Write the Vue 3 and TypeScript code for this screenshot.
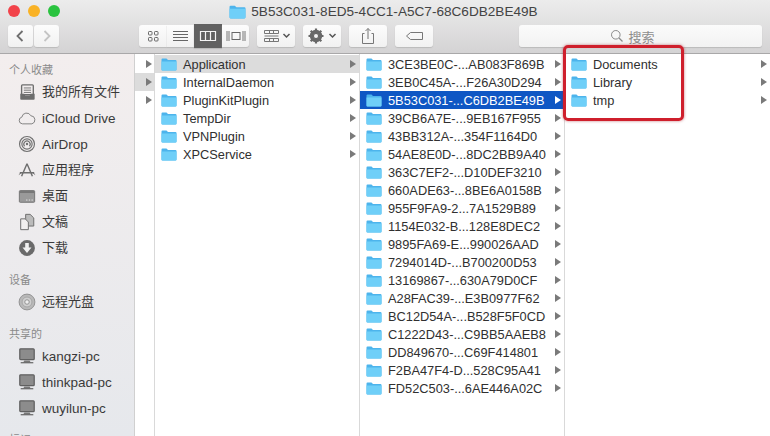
<script setup lang="ts">
type Side = { kind: 'head' | 'item'; label: string; icon?: string }
const side: Side[] = [
  { kind: 'head', label: '个人收藏' },
  { kind: 'item', label: '我的所有文件', icon: 'all' },
  { kind: 'item', label: 'iCloud Drive', icon: 'cloud' },
  { kind: 'item', label: 'AirDrop', icon: 'air' },
  { kind: 'item', label: '应用程序', icon: 'app' },
  { kind: 'item', label: '桌面', icon: 'desk' },
  { kind: 'item', label: '文稿', icon: 'doc' },
  { kind: 'item', label: '下载', icon: 'down' },
  { kind: 'head', label: '设备' },
  { kind: 'item', label: '远程光盘', icon: 'disc' },
  { kind: 'head', label: '共享的' },
  { kind: 'item', label: 'kangzi-pc', icon: 'pc' },
  { kind: 'item', label: 'thinkpad-pc', icon: 'pc' },
  { kind: 'item', label: 'wuyilun-pc', icon: 'pc' },
]
const isLatin = (s: string): boolean => /^[\x00-\x7f]+$/.test(s)
const col2 = ['Application', 'InternalDaemon', 'PluginKitPlugin', 'TempDir', 'VPNPlugin', 'XPCService']
const col3 = [
  '3CE3BE0C-...AB083F869B', '3EB0C45A-...F26A30D294', '5B53C031-...C6DB2BE49B', '39CB6A7E-...9EB167F955',
  '43BB312A-...354F1164D0', '54AE8E0D-...8DC2BB9A40', '363C7EF2-...D10DEF3210', '660ADE63-...8BE6A0158B',
  '955F9FA9-2...7A1529B89', '1154E032-B...128E8DEC2', '9895FA69-E...990026AAD', '7294014D-...B700200D53',
  '13169867-...630A79D0CF', 'A28FAC39-...E3B0977F62', 'BC12D54A-...B528F5F0CD', 'C1222D43-...C9BB5AAEB8',
  'DD849670-...C69F414801', 'F2BA47F4-D...528C95A41', 'FD52C503-...6AE446A02C',
]
const col4 = ['Documents', 'Library', 'tmp']
</script>

<template>
  <div class="win">
    <header class="chrome">
      <div class="titlebar">
        <div class="lights">
          <i class="light red"></i><i class="light yellow"></i><i class="light green"></i>
        </div>
        <div class="title">
          <svg class="folder big" viewBox="0 0 16 14"><use href="#fld" /></svg>
          <span>5B53C031-8ED5-4CC1-A5C7-68C6DB2BE49B</span>
        </div>
      </div>
      <div class="toolbar">
        <div class="group nav">
          <button class="btn w25"><svg viewBox="0 0 25 22" class="ic25"><path d="M14.500 6 9.500 11l5 5" fill="none" stroke="#6f6f6f" stroke-width="1.800"/></svg></button>
          <button class="btn w25"><svg viewBox="0 0 25 22" class="ic25"><path d="M10.500 6l5 5-5 5" fill="none" stroke="#c4c4c4" stroke-width="1.800"/></svg></button>
        </div>
        <div class="group views">
          <button class="seg"><svg viewBox="0 0 28 24" class="ic28"><g fill="none" stroke="#666" stroke-width="1"><rect x="9.500" y="7.500" width="3.500" height="3.500" rx=".8"/><rect x="15.500" y="7.500" width="3.500" height="3.500" rx=".8"/><rect x="9.500" y="13.500" width="3.500" height="3.500" rx=".8"/><rect x="15.500" y="13.500" width="3.500" height="3.500" rx=".8"/></g></svg></button>
          <button class="seg"><svg viewBox="0 0 28 24" class="ic28"><path d="M6 7.500h15M6 10.500h15M6 13.500h15M6 16.500h15" stroke="#666" stroke-width="1"/></svg></button>
          <button class="seg on"><svg viewBox="0 0 28 24" class="ic28"><path d="M6.500 7.500h15v9h-15zM11.500 7.500v9M16.500 7.500v9" fill="none" stroke="#f4f4f4" stroke-width="1.200"/></svg></button>
          <button class="seg"><svg viewBox="0 0 28 24" class="ic28"><path d="M5 7v10M7 7v10M21 7v10M23 7v10" stroke="#777" stroke-width="1"/><rect x="10" y="8.500" width="8" height="7" fill="none" stroke="#666" stroke-width="1"/></svg></button>
        </div>
        <button class="btn arrange"><svg viewBox="0 0 38 22" class="ic38"><g fill="none" stroke="#777" stroke-width="1"><path d="M7.500 5.500h14v3h-14zM7.500 13.500h14v3h-14zM12.500 5.500v3M16.500 5.500v3M12.500 13.500v3M16.500 13.500v3M7.500 11h14"/><path d="M26.500 9l3 3 3-3" stroke="#555" stroke-width="1.500"/></g></svg></button>
        <button class="btn gear"><svg viewBox="0 0 38 22" class="ic38"><circle cx="13" cy="11" r="4.600" fill="none" stroke="#686868" stroke-width="3.200"/><path d="M13 3.500v15M5.500 11h15M7.700 5.700l10.600 10.600M18.300 5.700 7.700 16.300" stroke="#686868" stroke-width="2.200"/><circle cx="13" cy="11" r="2" fill="#f3f2f3"/><path d="M26.500 9l3 3 3-3" fill="none" stroke="#555" stroke-width="1.500"/></svg></button>
        <button class="btn share"><svg viewBox="0 0 38 22" class="ic38"><path d="M15.500 8.500h-2v10h11v-10h-2M19 14V3.500M16.500 6 19 3.500 21.500 6" fill="none" stroke="#777" stroke-width="1"/></svg></button>
        <button class="btn tag"><svg viewBox="0 0 38 22" class="ic38"><path d="M11.500 11l4-3.500h12v7h-12z" fill="none" stroke="#777" stroke-width="1"/></svg></button>
        <div class="search">
          <svg viewBox="0 0 14 14" class="lens"><circle cx="5.800" cy="5.800" r="4.300" fill="none" stroke="#8a8a8a" stroke-width="1"/><path d="M9 9l3.500 3.500" stroke="#8a8a8a" stroke-width="1.200"/></svg>
          <span>搜索</span>
        </div>
      </div>
    </header>

    <div class="body">
      <aside class="sidebar">
        <template v-for="s in side" :key="s.label">
          <div v-if="s.kind === 'head'" class="head">{{ s.label }}</div>
          <div v-else class="item" :class="{ latin: isLatin(s.label) }">
            <svg class="sicon" viewBox="0 0 20 20">
              <g v-if="s.icon === 'all'">
                <rect x="4" y="2" width="13" height="11" rx="1" fill="none" stroke="#6d6d6d" stroke-width="1.500"/>
                <path d="M6.500 5.500h8M6.500 8h8M6.500 10.500h8" stroke="#6d6d6d" stroke-width="1"/>
                <path d="M2.500 12h4.500l1 2h5l1-2h4.500v5.500a1 1 0 0 1-1 1h-14a1 1 0 0 1-1-1z" fill="#6d6d6d"/>
              </g>
              <path v-else-if="s.icon === 'cloud'" d="M5 16.500a3.800 3.800 0 0 1-.7-7.500 5.300 5.300 0 0 1 10-1.500 4.600 4.600 0 0 1 1.200 9z" fill="none" stroke="#777" stroke-width="1"/>
              <g v-else-if="s.icon === 'air'" fill="none" stroke="#717171">
                <circle cx="10" cy="10" r="8.300" stroke-width="1.300"/>
                <circle cx="10" cy="10" r="5.700" stroke-width="1.300"/>
                <path d="M7.300 12.500a3.500 3.500 0 1 1 5.400 0" stroke-width="1.300"/>
                <circle cx="10" cy="10" r="1.300" fill="#717171" stroke="none"/>
              </g>
              <g v-else-if="s.icon === 'app'" fill="none" stroke="#6f6f6f" stroke-width="1.600">
                <path d="M10 3 4 17M10 3l6 14M2 13h16"/>
                <path d="M1 15l3-2M19 15l-3-2" stroke-width="1"/>
              </g>
              <g v-else-if="s.icon === 'desk'">
                <rect x="1.500" y="4" width="17" height="13" rx="1" fill="#9a9a9a" stroke="#6f6f6f"/>
                <rect x="2" y="4.500" width="16" height="2.200" fill="#777"/>
                <path d="M9 14.500h1.500M12 14.500h1.500M15 14.500h1.500" stroke="#eee" stroke-width="1"/>
              </g>
              <g v-else-if="s.icon === 'doc'" stroke="#6f6f6f" stroke-width="1.100">
                <path d="M8.500 1.500h5l4 4v9h-9z" fill="#bbb"/>
                <path d="M3 6.500h5l3.500 3.500v8.500H3z" fill="#f1efef"/>
              </g>
              <g v-else-if="s.icon === 'down'">
                <circle cx="10" cy="10" r="8.800" fill="#6a6a6a"/>
                <path d="M8 4.500h4v5h3l-5 6-5-6h3z" fill="#f1f1f1"/>
              </g>
              <g v-else-if="s.icon === 'disc'">
                <circle cx="10" cy="10" r="8.800" fill="#b9b9b9" stroke="#8c8c8c"/>
                <circle cx="10" cy="10" r="5.500" fill="#cfcfcf" stroke="#a3a3a3"/>
                <circle cx="10" cy="10" r="2.500" fill="#eee" stroke="#8c8c8c"/>
              </g>
              <g v-else>
                <rect x="2" y="2" width="16" height="12" rx="1" fill="#8c8c8c" stroke="#606060" stroke-width="1.400"/>
                <path d="M7 15h6l1 2H6z" fill="#777"/>
                <path d="M3 17.500h14" stroke="#555" stroke-width="1.200"/>
              </g>
            </svg>
            <span>{{ s.label }}</span>
          </div>
        </template>
        <div class="head last"><i class="mini"></i>标记</div>
      </aside>

      <div class="col col1">
        <div class="row strip" v-for="n in 3" :key="n" :class="{ picked: n === 2 }"><i class="tri"></i></div>
      </div>

      <div class="col col2">
        <div v-for="(c, i) in col2" :key="c" class="row" :class="{ dim: i === 0 }">
          <svg class="folder" viewBox="0 0 16 14"><use href="#fld" /></svg>
          <span class="name">{{ c }}</span><i class="tri"></i>
        </div>
      </div>

      <div class="col col3">
        <div v-for="(c, i) in col3" :key="c" class="row" :class="{ sel: i === 2 }">
          <svg class="folder" viewBox="0 0 16 14"><use href="#fld" /></svg>
          <span class="name">{{ c }}</span><i class="tri"></i>
        </div>
      </div>

      <div class="col col4">
        <div v-for="c in col4" :key="c" class="row">
          <svg class="folder" viewBox="0 0 16 14"><use href="#fld" /></svg>
          <span class="name">{{ c }}</span><i class="tri"></i>
        </div>
      </div>
    </div>

    <div class="mark"></div>

    <svg class="defs" width="0" height="0">
      <defs>
        <g id="fld">
          <path d="M.5 2.500a1 1 0 0 1 1-1h4l1.500 1.500h7.500a1 1 0 0 1 1 1v8.500a1 1 0 0 1-1 1h-13a1 1 0 0 1-1-1z" fill="#4db4ec"/>
          <path d="M.5 4.500h15v8a1 1 0 0 1-1 1h-13a1 1 0 0 1-1-1z" fill="#6fcff8"/>
        </g>
      </defs>
    </svg>
  </div>
</template>

<style scoped>
.win {
  position: relative;
  width: 770px;
  height: 436px;
  overflow: hidden;
  background: #fff;
  font-family: "Liberation Sans", "Noto Sans CJK SC", sans-serif;
  color: #2e2e2e;
}
.chrome {
  height: 54px;
  box-sizing: border-box;
  background: linear-gradient(#ececec, #d4d3d4);
  border-bottom: 1px solid #a9a8a9;
}
.titlebar {
  position: relative;
  height: 22px;
  display: flex;
  justify-content: center;
  align-items: center;
}
.lights {
  position: absolute;
  left: 8px;
  top: 5px;
  display: flex;
  gap: 8px;
}
.light { width: 12px; height: 12px; border-radius: 50%; }
.red { background: #f2434a; }
.yellow { background: #f9b225; }
.green { background: #2ac33f; }
.title {
  display: flex;
  align-items: center;
  gap: 5px;
  padding-top: 1px;
  margin-right: 3px;
  font-size: 13.600px;
  color: #444;
}
.toolbar {
  height: 31px;
  display: flex;
  align-items: flex-start;
  padding: 3px 0 0 8px;
}
.group { display: flex; }
.btn, .seg {
  padding: 0;
  border: 0;
  display: block;
  background: linear-gradient(#fcfcfc, #f1f1f1);
  box-shadow: 0 1px 1px #bbb;
}
.btn { height: 22px; border-radius: 3px; }
.btn svg, .seg svg { display: block; }
.w25 { width: 25px; }
.nav { gap: 1px; }
.ic25 { width: 25px; height: 22px; }
.views { margin-left: 80px; border-radius: 3px; height: 22px; }
.seg { width: 27px; height: 22px; overflow: hidden; }
.seg svg { margin-top: -1px; }
.seg:first-child { width: 28px; border-radius: 3px 0 0 3px; }
.seg:last-child { border-radius: 0 3px 3px 0; }
.seg.on { width: 28px; height: 24px; margin-top: -1px; background: #616161; }
.seg.on svg { margin-top: 0; }
.ic28 { width: 28px; height: 24px; }
.arrange, .gear, .share, .tag { width: 38px; margin-left: 8px; }
.ic38 { width: 38px; height: 22px; }
.search {
  width: 243px;
  height: 22px;
  margin-left: 86px;
  border-radius: 3px;
  background: linear-gradient(#fbfbfb, #f2f2f2);
  box-shadow: 0 1px 1px #bbb;
  display: flex;
  align-items: center;
  justify-content: center;
  gap: 4px;
  padding-right: 16px;
  box-sizing: border-box;
  font-size: 13px;
  color: #8e8e8e;
}
.lens { width: 14px; height: 14px; }

.body {
  display: flex;
  height: 382px;
}
.sidebar {
  width: 135px;
  height: 382px;
  flex: none;
  box-sizing: border-box;
  border-right: 1px solid #d0d0d0;
  background: linear-gradient(#f3eeee, #e6e8ec);
  overflow: hidden;
}
.head {
  height: 28px;
  box-sizing: border-box;
  padding: 0 0 2px 9px;
  display: flex;
  align-items: flex-end;
  font-size: 11px;
  line-height: 13px;
  color: #8a8a8a;
}
.head:first-child { height: 25px; }
.head.last { position: relative; }
.mini {
  position: absolute;
  left: 0;
  bottom: 5px;
  border-left: 4px solid #8a8a8a;
  border-top: 3px solid transparent;
  border-bottom: 3px solid transparent;
}
.item {
  height: 26px;
  display: flex;
  align-items: center;
  padding-left: 18px;
  gap: 6px;
  font-size: 13px;
  color: #3a3a3a;
}
.item span { margin-bottom: 3px; }
.item.latin { font-size: 13.500px; }
.item.latin span { margin-bottom: 0; }
.sicon { width: 18px; height: 18px; flex: none; }

.col { box-sizing: border-box; padding-top: 1px; }
.col1 { width: 20px; flex: none; border-right: 1px solid #d9d9d9; }
.col2 { width: 205px; flex: none; border-right: 1px solid #d9d9d9; }
.col3 { width: 205px; flex: none; border-right: 1px solid #d9d9d9; }
.col4 { flex: 1; }
.row {
  height: 18px;
  display: flex;
  align-items: center;
  padding: 0 3px 0 6px;
  font-size: 12.800px;
  color: #303030;
}
.strip { padding: 0; justify-content: center; }
.picked { background: #dcdcdc; }
.dim { background: #dcdcdc; }
.sel { background: #0f57c4; color: #fff; }
.folder { width: 16px; height: 14px; flex: none; }
.big { width: 17px; height: 15px; }
.name { margin-left: 6px; flex: 1; white-space: nowrap; }
.tri {
  width: 0;
  height: 0;
  flex: none;
  border-left: 6px solid #7a7a7a;
  border-top: 4px solid transparent;
  border-bottom: 4px solid transparent;
}
.strip .tri { margin-left: 8px; }
.sel .tri { border-left-color: #fff; }
.mark {
  position: absolute;
  left: 563px;
  top: 45px;
  width: 121px;
  height: 76px;
  box-sizing: border-box;
  border: 3px solid #cf1f2c;
  border-radius: 5px;
  box-shadow: 0 0 3px rgba(160, 30, 40, .6);
}
.defs { position: absolute; }
</style>
